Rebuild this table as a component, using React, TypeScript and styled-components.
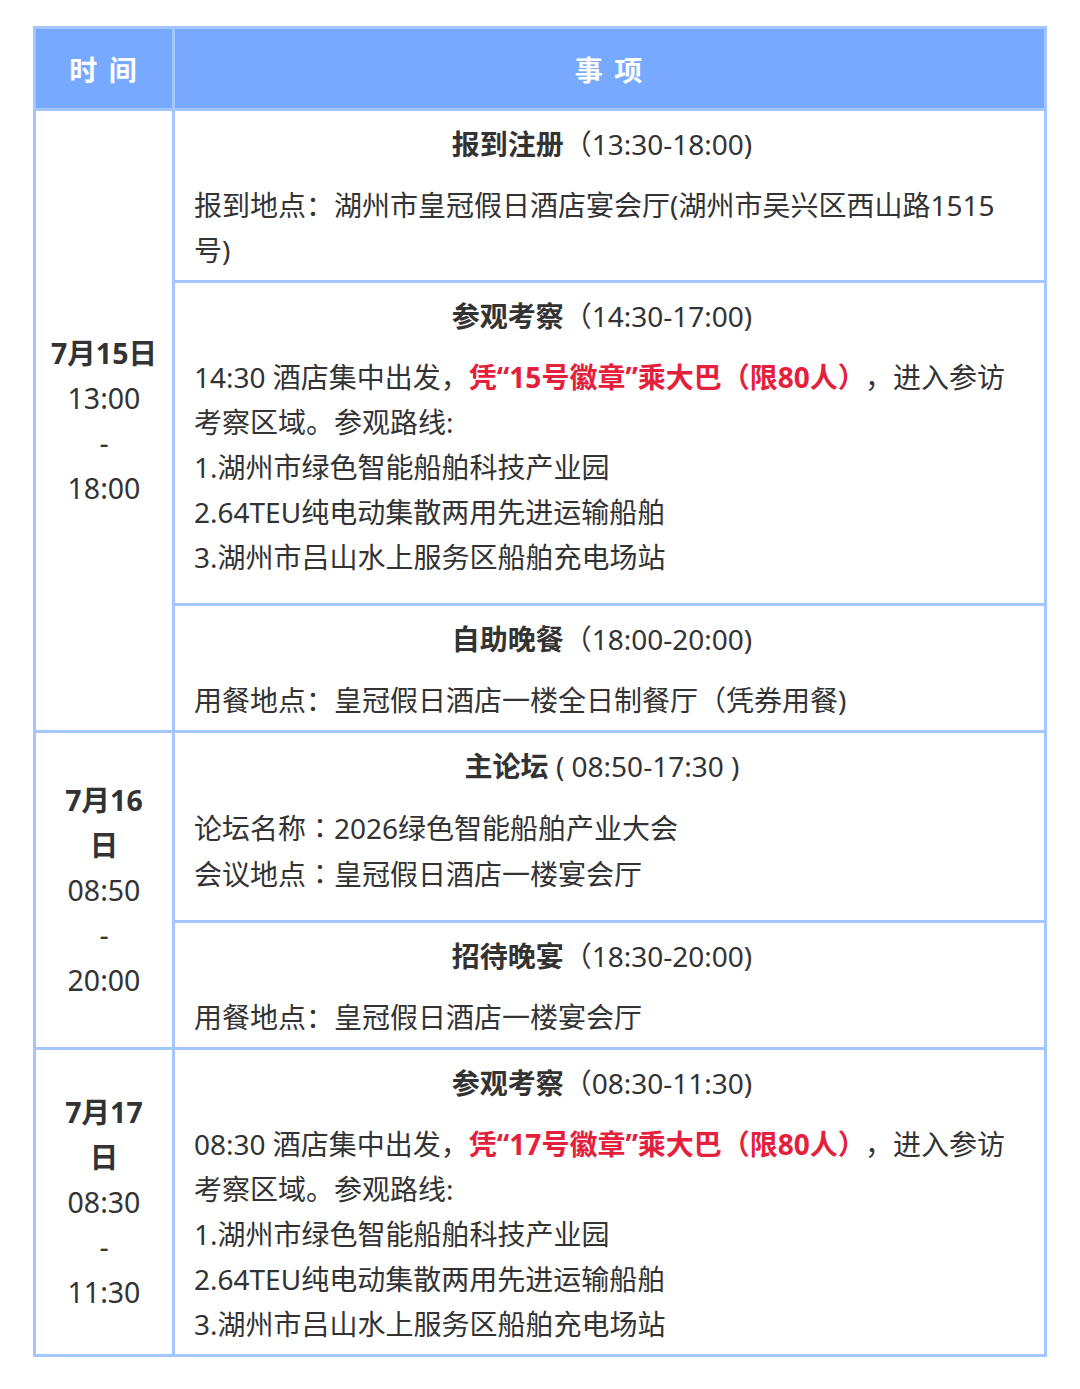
import React from 'react';
import styled, { createGlobalStyle } from 'styled-components';

const GlobalStyle = createGlobalStyle`
  html, body {
    margin: 0;
    padding: 0;
    background: #ffffff;
  }
  body {
    font-family: "Noto Sans", "Noto Sans CJK SC", sans-serif;
    color: #333333;
  }
`;

const Page = styled.div`
  padding: 26px 33px 34px 33px;
`;

const Table = styled.table`
  width: 1014px;
  border-collapse: collapse;
  table-layout: fixed;
  border: 3px solid #a3c6ff;
`;

const HeadCell = styled.th`
  height: 79px;
  padding: 0;
  background: #76a9ff;
  color: #ffffff;
  font-size: 28px;
  font-weight: 700;
  letter-spacing: 2px;
  border: 3px solid #a3c6ff;
  text-align: center;
  vertical-align: middle;
`;

const TimeCell = styled.td`
  padding: 0 6px;
  border: 3px solid #a3c6ff;
  text-align: center;
  vertical-align: middle;
  font-size: 28.5px;
  line-height: 45px;
  color: #333333;
`;

const DateText = styled.div`
  font-weight: 700;
`;

const ItemCell = styled.td<{ $extra?: boolean }>`
  padding: 11px 34px ${p => (p.$extra ? '23px' : '7px')} 19px;
  border: 3px solid #a3c6ff;
  vertical-align: top;
  font-size: 28px;
  line-height: 45px;
  color: #333333;
`;

const Title = styled.div`
  text-align: center;
  margin-bottom: 16px;
  white-space: nowrap;
`;

const Strong = styled.span`
  font-weight: 700;
`;

const Red = styled.span`
  font-weight: 700;
  color: #e5203d;
  margin-right: 13px;
`;

const Line = styled.div`
  white-space: nowrap;
`;

const Colon = styled.span`
  font-family: "Noto Sans CJK TC", sans-serif;
`;

type Slot = { date: React.ReactNode; from: string; to: string };

const TimeBlock: React.FC<Slot & { rows: number }> = ({ date, from, to, rows }) => (
  <TimeCell rowSpan={rows}>
    <DateText>{date}</DateText>
    <div>{from}</div>
    <div>-</div>
    <div>{to}</div>
  </TimeCell>
);

const Route: React.FC<{ time: string; badge: string }> = ({ time, badge }) => (
  <>
    <Line>
      {time} 酒店集中出发，<Red>凭“{badge}号徽章”乘大巴（限80人）</Red>，进入参访
    </Line>
    <Line>考察区域。参观路线:</Line>
    <Line>1.湖州市绿色智能船舶科技产业园</Line>
    <Line>2.64TEU纯电动集散两用先进运输船舶</Line>
    <Line>3.湖州市吕山水上服务区船舶充电场站</Line>
  </>
);

export default function App() {
  return (
    <Page>
      <GlobalStyle />
      <Table>
        <colgroup>
          <col style={{ width: 139 }} />
          <col />
        </colgroup>
        <thead>
          <tr>
            <HeadCell>时 间</HeadCell>
            <HeadCell>事 项</HeadCell>
          </tr>
        </thead>
        <tbody>
          <tr>
            <TimeBlock rows={3} date="7月15日" from="13:00" to="18:00" />
            <ItemCell>
              <Title>
                <Strong>报到注册</Strong>（13:30-18:00)
              </Title>
              <Line>报到地点：湖州市皇冠假日酒店宴会厅(湖州市吴兴区西山路1515</Line>
              <Line>号)</Line>
            </ItemCell>
          </tr>
          <tr>
            <ItemCell $extra>
              <Title>
                <Strong>参观考察</Strong>（14:30-17:00)
              </Title>
              <Route time="14:30" badge="15" />
            </ItemCell>
          </tr>
          <tr>
            <ItemCell>
              <Title>
                <Strong>自助晚餐</Strong>（18:00-20:00)
              </Title>
              <Line>用餐地点：皇冠假日酒店一楼全日制餐厅（凭券用餐)</Line>
            </ItemCell>
          </tr>
          <tr>
            <TimeBlock
              rows={2}
              date={<>7月16<br />日</>}
              from="08:50"
              to="20:00"
            />
            <ItemCell $extra>
              <Title>
                <Strong>主论坛</Strong> ( 08:50-17:30 )
              </Title>
              <Line>
                论坛名称<Colon>：</Colon>2026绿色智能船舶产业大会
              </Line>
              <Line>
                会议地点<Colon>：</Colon>皇冠假日酒店一楼宴会厅
              </Line>
            </ItemCell>
          </tr>
          <tr>
            <ItemCell>
              <Title>
                <Strong>招待晚宴</Strong>（18:30-20:00)
              </Title>
              <Line>用餐地点：皇冠假日酒店一楼宴会厅</Line>
            </ItemCell>
          </tr>
          <tr>
            <TimeBlock
              rows={1}
              date={<>7月17<br />日</>}
              from="08:30"
              to="11:30"
            />
            <ItemCell>
              <Title>
                <Strong>参观考察</Strong>（08:30-11:30)
              </Title>
              <Route time="08:30" badge="17" />
            </ItemCell>
          </tr>
        </tbody>
      </Table>
    </Page>
  );
}
